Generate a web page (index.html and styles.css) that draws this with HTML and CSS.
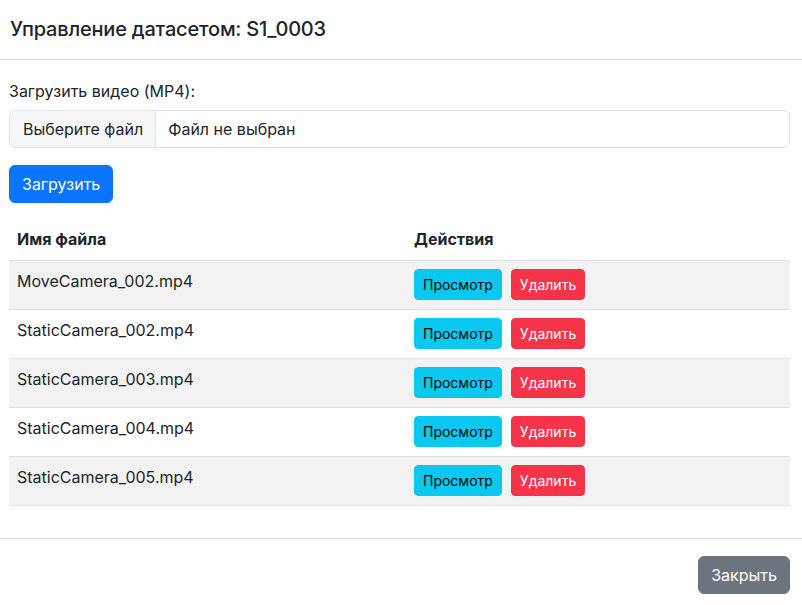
FILE: index.html
```html
<!DOCTYPE html>
<html lang="ru">
<head>
    <meta charset="UTF-8">
    <meta name="viewport" content="width=device-width, initial-scale=1.0">
    <title>Управление датасетом</title>
    <link rel="stylesheet" href="styles.css">
</head>
<body>
    <div class="modal-content">
        <div class="modal-header">
            <h5 class="modal-title">Управление датасетом: S1_0003</h5>
        </div>

        <div class="modal-body">
            <label class="form-label" for="videoFile">Загрузить видео (MP4):</label>
            <label class="file-input" for="videoFile">
                <span class="file-button">Выберите файл</span>
                <span class="file-name">Файл не выбран</span>
                <input type="file" id="videoFile" accept="video/mp4">
            </label>
            <button class="btn btn-primary upload-btn">Загрузить</button>

            <table class="table">
                <thead>
                    <tr>
                        <th class="col-name">Имя файла</th>
                        <th>Действия</th>
                    </tr>
                </thead>
                <tbody>
                    <tr>
                        <td>MoveCamera_002.mp4</td>
                        <td><div class="actions"><button class="btn btn-sm btn-info">Просмотр</button><button class="btn btn-sm btn-danger">Удалить</button></div></td>
                    </tr>
                    <tr>
                        <td>StaticCamera_002.mp4</td>
                        <td><div class="actions"><button class="btn btn-sm btn-info">Просмотр</button><button class="btn btn-sm btn-danger">Удалить</button></div></td>
                    </tr>
                    <tr>
                        <td>StaticCamera_003.mp4</td>
                        <td><div class="actions"><button class="btn btn-sm btn-info">Просмотр</button><button class="btn btn-sm btn-danger">Удалить</button></div></td>
                    </tr>
                    <tr>
                        <td>StaticCamera_004.mp4</td>
                        <td><div class="actions"><button class="btn btn-sm btn-info">Просмотр</button><button class="btn btn-sm btn-danger">Удалить</button></div></td>
                    </tr>
                    <tr>
                        <td>StaticCamera_005.mp4</td>
                        <td><div class="actions"><button class="btn btn-sm btn-info">Просмотр</button><button class="btn btn-sm btn-danger">Удалить</button></div></td>
                    </tr>
                </tbody>
            </table>
        </div>

        <div class="modal-footer">
            <button class="btn btn-secondary">Закрыть</button>
        </div>
    </div>
</body>
</html>
```

FILE: styles.css
```css
* {
    box-sizing: border-box;
}

body {
    margin: 0;
    padding: 0;
    font-family: Inter, "Noto Sans", "Liberation Sans", sans-serif;
    font-size: 16px;
    line-height: 1.5;
    color: #212529;
    background: #fff;
}

.modal-content {
    width: 802px;
    height: 605px;
    display: flex;
    flex-direction: column;
}

/* Шапка */
.modal-header {
    padding: 17px 12px 18px 10px;
    border-bottom: 1px solid #dee2e6;
}

.modal-title {
    margin: 0;
    font-size: 20px;
    font-weight: 500;
    line-height: 1.2;
    letter-spacing: -0.2px;
}

/* Тело */
.modal-body {
    padding: 19px 12px 16px 9px;
    border-bottom: 1px solid #dee2e6;
}

.form-label {
    display: block;
    margin-bottom: 7px;
}

.file-input {
    display: flex;
    height: 38px;
    border: 1px solid #dee2e6;
    border-radius: 6px;
    overflow: hidden;
    margin-bottom: 17px;
    cursor: pointer;
}

.file-input input {
    display: none;
}

.file-button {
    padding: 6px 12px 6px 13px;
    background: #f6f7f8;
    border-right: 1px solid #dee2e6;
}

.file-name {
    padding: 6px 12px;
}

/* Кнопки */
.btn {
    display: inline-block;
    font-family: inherit;
    font-size: 16px;
    line-height: 1.5;
    padding: 6px 12px;
    border: 1px solid transparent;
    border-radius: 6px;
    cursor: pointer;
}

.btn-sm {
    font-size: 14px;
    padding: 4px 8px;
    border-radius: 4px;
}

.btn-primary {
    background: #0b74fc;
    border-color: #0b74fc;
    color: #fff;
}

.btn-info {
    background: #0ac8f0;
    border-color: #0ac8f0;
    color: #000;
}

.btn-danger {
    background: #f5344a;
    border-color: #f5344a;
    color: #fff;
}

.btn-secondary {
    background: #6c757d;
    border-color: #6c757d;
    color: #fff;
}

.upload-btn {
    margin-bottom: 16px;
}

/* Таблица */
.table {
    width: 100%;
    border-collapse: collapse;
    margin-bottom: 16px;
}

.table th,
.table td {
    text-align: left;
    padding: 8px 8px 9px;
    vertical-align: top;
    border-bottom: 1px solid #dee2e6;
}

.table th {
    font-weight: 700;
}

.col-name {
    width: 397px;
}

.table tbody tr:nth-child(odd) {
    background: #f2f2f2;
}

.actions {
    display: flex;
    gap: 9px;
}

/* Подвал */
.modal-footer {
    display: flex;
    justify-content: flex-end;
    padding: 17px 12px 11px;
}
```
